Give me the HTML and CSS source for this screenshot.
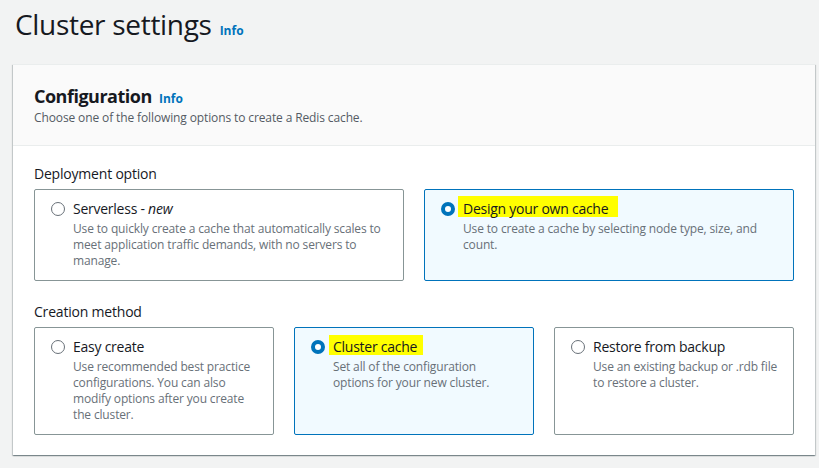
FILE: index.html
```html
<!DOCTYPE html>
<html lang="en">
<head>
<meta charset="utf-8">
<title>Cluster settings</title>
<link rel="stylesheet" href="styles.css">
</head>
<body>
<main class="page">
  <h1 class="page-title">Cluster settings <a class="info info-title" href="#">Info</a></h1>
  <section class="panel">
    <header class="panel-header">
      <h2 class="panel-title">Configuration <a class="info" href="#">Info</a></h2>
      <p class="panel-desc">Choose one of the following options to create a Redis cache.</p>
    </header>
    <div class="panel-body">
      <div class="field">
        <div class="field-label">Deployment option</div>
        <div class="tiles tiles-2">
          <div class="tile">
            <span class="radio"></span>
            <div class="tile-text">
              <div class="tile-label">Serverless - <em>new</em></div>
              <div class="tile-desc">Use to quickly create a cache that automatically scales to meet application traffic demands, with no servers to manage.</div>
            </div>
          </div>
          <div class="tile selected">
            <span class="radio"></span>
            <div class="tile-text">
              <div class="tile-label"><span class="hl hl-a">Design your own cache</span></div>
              <div class="tile-desc">Use to create a cache by selecting node type, size, and count.</div>
            </div>
          </div>
        </div>
      </div>
      <div class="field">
        <div class="field-label">Creation method</div>
        <div class="tiles tiles-3">
          <div class="tile">
            <span class="radio"></span>
            <div class="tile-text">
              <div class="tile-label">Easy create</div>
              <div class="tile-desc">Use recommended best practice configurations. You can also modify options after you create the cluster.</div>
            </div>
          </div>
          <div class="tile selected">
            <span class="radio"></span>
            <div class="tile-text">
              <div class="tile-label"><span class="hl hl-b">Cluster cache</span></div>
              <div class="tile-desc tile-desc-narrow">Set all of the configuration options for your new cluster.</div>
            </div>
          </div>
          <div class="tile">
            <span class="radio"></span>
            <div class="tile-text">
              <div class="tile-label">Restore from backup</div>
              <div class="tile-desc">Use an existing backup or .rdb file to restore a cluster.</div>
            </div>
          </div>
        </div>
      </div>
    </div>
  </section>
</main>
</body>
</html>
```

FILE: styles.css
```css
* { box-sizing: border-box; }
html, body { margin: 0; padding: 0; }
body {
  background: #f2f3f3;
  font-family: "Open Sans", "Noto Sans", sans-serif;
  color: #16191f;
  width: 819px;
  height: 468px;
  overflow: hidden;
}
.page {
  padding: 0 4px 0 13px;
}
.page-title {
  margin: 0;
  padding: 6px 0 0 2px;
  height: 64px;
  font-size: 28px;
  line-height: 36px;
  font-weight: 400;
  letter-spacing: -0.3px;
  color: #16191f;
}
.info {
  color: #0073bb;
  font-size: 12px;
  line-height: 1;
  font-weight: 700;
  letter-spacing: 0;
  text-decoration: none;
  margin-left: 3px;
}
.info-title { margin-left: 1px; }
.panel {
  width: 802px;
  background: #fff;
  box-shadow: 0 1px 1px 0 rgba(0,28,36,.3), 1px 1px 1px 0 rgba(0,28,36,.15), -1px 1px 1px 0 rgba(0,28,36,.15);
  border-top: 1px solid #eaeded;
}
.panel-header {
  background: #fafafa;
  border-bottom: 1px solid #eaeded;
  padding: 19px 21px 19px 21px;
}
.panel-title {
  margin: 0;
  font-size: 18px;
  line-height: 24px;
  font-weight: 700;
  letter-spacing: -0.5px;
}
.panel-desc {
  margin: 2px 0 0 0;
  font-size: 12px;
  line-height: 16px;
  letter-spacing: -0.12px;
  color: #545b64;
}
.panel-body {
  padding: 18px 21px 20px 21px;
  display: flex;
  flex-direction: column;
  gap: 21px;
}
.field-label {
  font-size: 14px;
  line-height: 20px;
  letter-spacing: -0.2px;
  margin-bottom: 5px;
}
.tiles {
  display: grid;
  gap: 20px;
}
.tiles-2 { grid-template-columns: 370px 370px; }
.tiles-3 { grid-template-columns: 240px 240px 240px; }
.tile {
  border: 1px solid #879596;
  border-radius: 2px;
  padding: 9px 12px 11px 16px;
  display: flex;
  gap: 8px;
  background: #fff;
}
.tile.selected {
  border-color: #0073bb;
  background: #f1faff;
}
.radio {
  flex: 0 0 14px;
  width: 14px;
  height: 14px;
  margin-top: 3px;
  border-radius: 50%;
  border: 1.5px solid #687078;
  background: #fff;
}
.selected .radio {
  border: 4px solid #0073bb;
}
.tile-label {
  font-size: 14px;
  line-height: 20px;
  letter-spacing: -0.25px;
  color: #16191f;
}
.tile-desc {
  margin-top: 2px;
  font-size: 12px;
  line-height: 16px;
  letter-spacing: -0.15px;
  color: #687078;
}
.tile-desc-narrow { max-width: 178px; }
.hl {
  position: relative;
  z-index: 0;
}
.hl::before {
  content: "";
  position: absolute;
  z-index: -1;
  background: #ffff00;
}
.hl-a::before { left: -5px; right: -10px; top: -3px; bottom: 1px; }
.hl-b::before { left: -4px; right: -6px; top: -2px; bottom: 1px; }
```
